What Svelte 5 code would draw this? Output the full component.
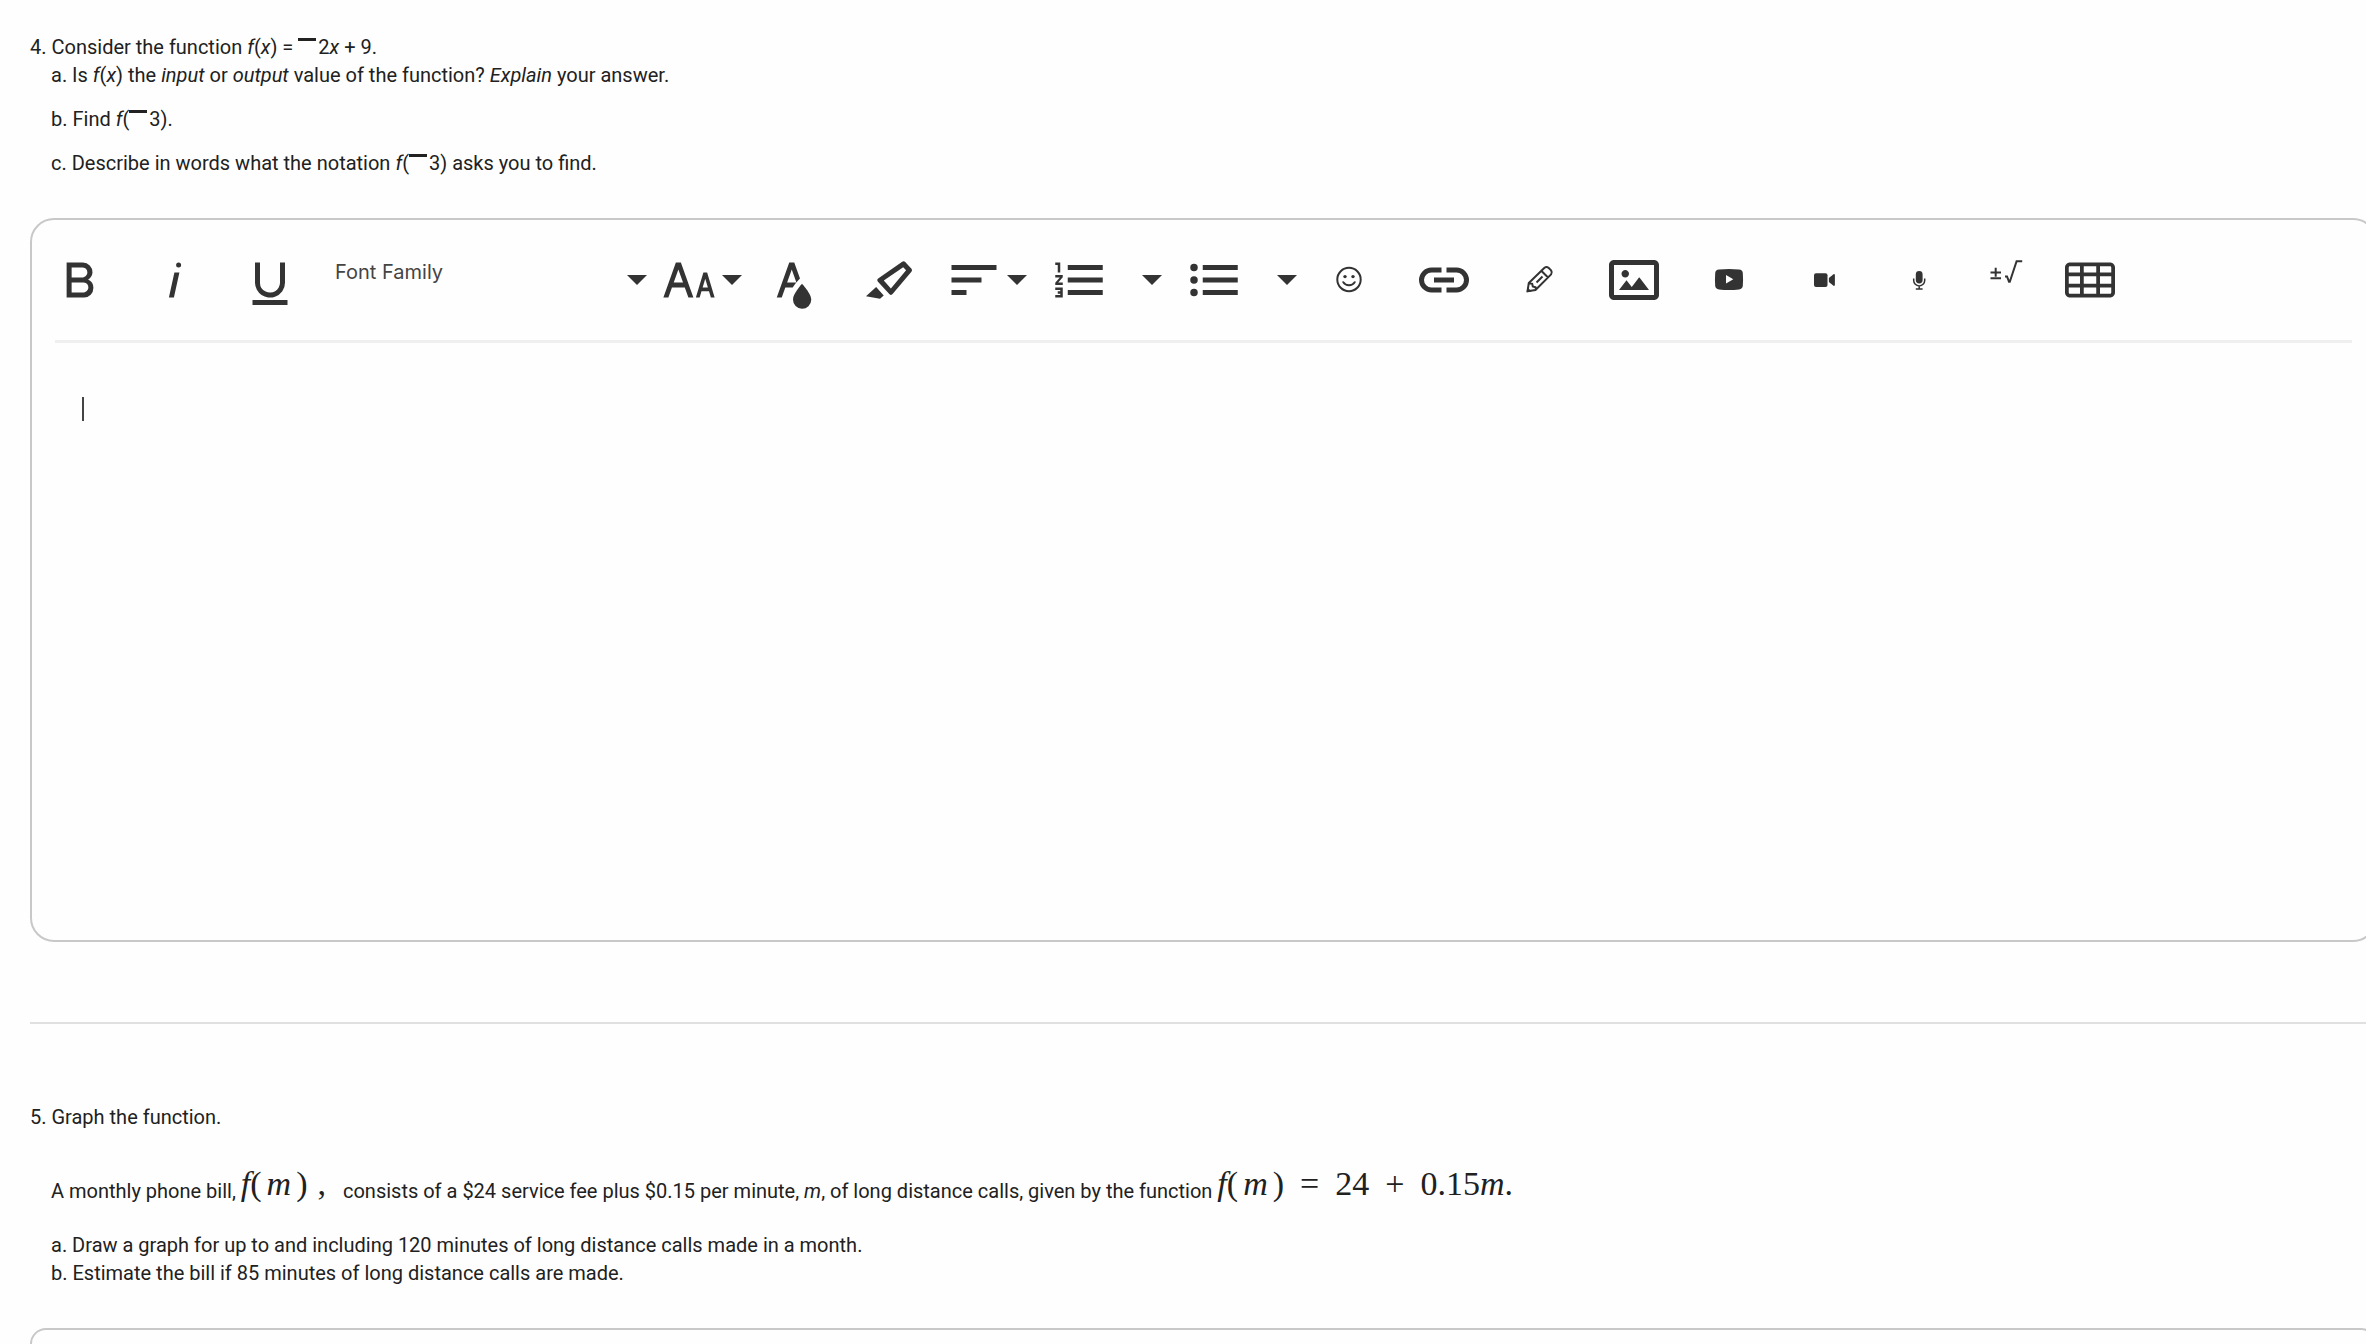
<script>
  const icons = {
    bold: 'M15.25,11.8h0A3.68,3.68,0,0,0,17,9a3.93,3.93,0,0,0-3.86-4H6.65V19h7a3.74,3.74,0,0,0,3.7-3.78V15.1A3.64,3.64,0,0,0,15.25,11.8ZM8.65,7h4.2a2.09,2.09,0,0,1,2,1.3,2.09,2.09,0,0,1-1.37,2.61,2.23,2.23,0,0,1-.63.09H8.65Zm4.6,10H8.65V13h4.6a2.09,2.09,0,0,1,2,1.3,2.09,2.09,0,0,1-1.37,2.61A2.23,2.23,0,0,1,13.25,17Z',
    italic: 'M11.76,9h2l-2.2,10h-2Zm1.68-4a1,1,0,1,0,1,1,1,1,0,0,0-1-1Z',
    underline: 'M19,20v2H5V20Zm-3-6.785a4,4,0,0,1-5.74,3.4A3.75,3.75,0,0,1,8,13.085V5.005H6v8.21a6,6,0,0,0,8,5.44,5.851,5.851,0,0,0,4-5.65v-8H16ZM16,5v0h2V5ZM8,5H6v0H8Z',
    size: 'M20.75,19h1.5l-3-10h-1.5l-3,10h1.5L17,16.5h3Zm-3.3-4,1.05-3.5L19.55,15Zm-5.7,4h2l-5-14h-2l-5,14h2l1.43-4h5.14ZM5.89,13,7.75,7.79,9.61,13Z',
    color: 'M15.2,13.494s-3.6,3.9-3.6,6.3a3.65,3.65,0,0,0,7.3.1v-.1C18.9,17.394,15.2,13.494,15.2,13.494Zm-1.47-1.357.669-.724L12.1,5h-2l-5,14h2l1.43-4h2.943A24.426,24.426,0,0,1,13.726,12.137ZM11.1,7.8l1.86,5.2H9.244Z',
    highlight: 'M9.918,12.241l7.748-5.39,1.179,1.296-6.094,7.207L9.918,12.241M7.587,12.652l4.535,4.983a.934.934,0,0,0,1.395-.091L20.969,8.731A.908.908,0,0,0,20.991,7.533l-2.513-2.761a.908.908,0,0,0-1.195-.091L7.809,11.271A.934.934,0,0,0,7.587,12.652ZM2.794,18.528,8.411,19.5l1.479-1.346-3.029-3.328Z',
    align: 'M3 18h6v-2H3v2zM3 6v2h18V6H3zm0 7h12v-2H3v2z',
    ordered: 'M2.5,16h2v.5h-1v1h1V18h-2v1h3V15h-3Zm1-7h1V5h-2V6h1Zm-1,2H4.3L2.5,13.1V14h3V13H3.7l1.8-2.1V10h-3Zm5-5V8h14V6Zm0,12h14V16H7.5Zm0-5h14V11H7.5Z',
    bullets: 'M7.5 6v2h14V6zM7.5 11v2h14v-2zM7.5 16v2h14v-2zM4 5.5a1.5 1.5 0 1 0 0 3 1.5 1.5 0 0 0 0-3zM4 10.5a1.5 1.5 0 1 0 0 3 1.5 1.5 0 0 0 0-3zM4 15.5a1.5 1.5 0 1 0 0 3 1.5 1.5 0 0 0 0-3z',
    link: 'M11,17H7A5,5,0,0,1,7,7h4V9H7a3,3,0,0,0,0,6h4ZM17,7H13V9h4a3,3,0,0,1,0,6H13v2h4A5,5,0,0,0,17,7Zm-1,4H8v2h8Z',
    image: 'M14.2,11l3.8,5H6l3-3.9l2.1,2.7L14,11H14.2z M8.5,11c0.8,0,1.5-0.7,1.5-1.5S9.3,8,8.5,8S7,8.7,7,9.5C7,10.3,7.7,11,8.5,11z M22,6v12c0,1.1-0.9,2-2,2H4c-1.1,0-2-0.9-2-2V6c0-1.1,0.9-2,2-2h16C21.1,4,22,4.9,22,6z M20,8.8V6H4v12h16V8.8z',
    table: 'M20,5H4C2.9,5,2,5.9,2,7v2v1.5v3V15v2c0,1.1,0.9,2,2,2h16c1.1,0,2-0.9,2-2v-2v-1.5v-3V9V7C22,5.9,21.1,5,20,5z M9.5,13.5v-3h5v3H9.5z M14.5,15v2.5h-5V15H14.5z M9.5,9V6.5h5V9H9.5z M3.5,7c0-0.3,0.2-0.5,0.5-0.5h4V9H3.5V7z M3.5,10.5H8v3H3.5V10.5z M3.5,17v-2H8v2.5H4C3.7,17.5,3.5,17.3,3.5,17z M20.5,17c0,0.3-0.2,0.5-0.5,0.5h-4V15h4.5V17z M20.5,13.5H16v-3h4.5V13.5z M16,9V6.5h4c0.3,0,0.5,0.2,0.5,0.5v2H16z'
  };
</script>

{#snippet icon(name)}
  <svg class="icon" viewBox="0 0 24 24" aria-hidden="true"><path fill-rule="evenodd" d={icons[name]} /></svg>
{/snippet}

{#snippet arrow()}
  <svg class="arrow" viewBox="0 0 20 10" aria-hidden="true"><path d="M0 0h20L10 10z" /></svg>
{/snippet}

{#snippet tool(name, label)}
  <button type="button" class="tool" aria-label={label}>{@render icon(name)}</button>
{/snippet}

{#snippet neg()}<span class="neg" role="img" aria-label="negative"></span>{/snippet}

{#snippet fm()}<span class="call"><span><i>f</i>(</span><i>m</i><span>)</span></span>{/snippet}

<main>
  <section class="question">
    <p>4. Consider the function <i>f</i>(<i>x</i>) = {@render neg()}2<i>x</i> + 9.</p>
    <p class="part">a. Is <i>f</i>(<i>x</i>) the <i>input</i> or <i>output</i> value of the function? <i>Explain</i> your answer.</p>
    <p class="part spaced">b. Find <i>f</i>({@render neg()}3).</p>
    <p class="part spaced">c. Describe in words what the notation <i>f</i>({@render neg()}3) asks you to find.</p>
  </section>

  <div class="editor">
    <div class="toolbar" role="toolbar" aria-label="Formatting">
      {@render tool('bold', 'Bold')}
      {@render tool('italic', 'Italic')}
      {@render tool('underline', 'Underline')}
      <div class="family">
        <select aria-label="Font family"><option>Font Family</option></select>
        {@render arrow()}
      </div>
      <button type="button" class="tool with-arrow" aria-label="Font size">{@render icon('size')}{@render arrow()}</button>
      {@render tool('color', 'Text color')}
      {@render tool('highlight', 'Highlight')}
      <button type="button" class="tool with-arrow" aria-label="Align">{@render icon('align')}{@render arrow()}</button>
      {@render tool('ordered', 'Ordered list')}
      <button type="button" class="more" aria-label="Ordered list styles">{@render arrow()}</button>
      {@render tool('bullets', 'Bulleted list')}
      <button type="button" class="more" aria-label="Bulleted list styles">{@render arrow()}</button>
      <button type="button" class="tool" aria-label="Emoji">
        <svg class="icon line" viewBox="0 0 60 60" aria-hidden="true">
          <circle cx="30" cy="29.5" r="11.7" />
          <path d="M24.3 32.2c2.6 4 8.8 4 11.4 0" stroke-linecap="round" />
          <circle class="solid" cx="26" cy="26.6" r="1.7" /><circle class="solid" cx="34" cy="26.6" r="1.7" />
        </svg>
      </button>
      {@render tool('link', 'Insert link')}
      <button type="button" class="tool" aria-label="Draw">
        <svg class="icon line" viewBox="0 0 60 60" aria-hidden="true">
          <path stroke-linejoin="round" d="M18.500 41.300l1.300-8.300L35.500 17.800q2-1.400 4 0l2.600 2.600q1.400 2 0 4L26.500 40zM32.500 21l6.300 6.300M20 33.200l3.200.6.600 2.800 2.800.6.200 2.600M27.500 32.500l6-6" />
          <path class="solid" d="M17.600 42.300l.8-5 4.200 4.200z" />
        </svg>
      </button>
      {@render tool('image', 'Insert image')}
      <button type="button" class="tool" aria-label="Insert video">
        <svg class="icon" viewBox="0 0 60 60" aria-hidden="true">
          <path fill-rule="evenodd" d="M20 19.600q10-1.200 20 0 3.500.4 3.800 3.400.5 6.500 0 13-.3 3-3.800 3.400-10 1.200-20 0-3.500-.4-3.800-3.400-.5-6.500 0-13 .3-3 3.800-3.400zM27 25v8.400l7.300-4.200z" />
        </svg>
      </button>
      <button type="button" class="tool" aria-label="Record video">
        <svg class="icon" viewBox="0 0 60 60" aria-hidden="true">
          <rect x="20" y="23.200" width="13.500" height="13.800" rx="2" />
          <path d="M34.900 28l4.600-3.800q1.400-.4 1.400 1v9.600q0 1.400-1.400 1L34.900 32z" />
        </svg>
      </button>
      <button type="button" class="tool" aria-label="Record audio">
        <svg class="icon" viewBox="0 0 60 60" aria-hidden="true">
          <rect x="26.800" y="21" width="6.800" height="12.400" rx="3.400" />
          <path fill="none" stroke="#333" stroke-width="1.500" d="M24.700 28.400v2a5.500 5.500 0 0 0 11 0v-2M30.200 36v3M26.800 39h6.800" />
        </svg>
      </button>
      <button type="button" class="tool math" aria-label="Insert equation">
        <svg class="icon line" viewBox="0 0 60 60" aria-hidden="true">
          <path d="M16.500 22.500h10.500M21.700 17.700v9M16.500 28.300h10.500M31 26.500h2l2 5.200h.8L42.600 11.200h5.600" />
        </svg>
      </button>
      {@render tool('table', 'Insert table')}
    </div>
    <div class="writing">
      <span class="caret"></span>
      <textarea aria-label="Answer to question 4"></textarea>
    </div>
  </div>

  <hr />

  <section class="question">
    <p>5. Graph the function.</p>
    <p class="part monthly">A monthly phone bill, <span class="formula bill">{@render fm()}<span>,</span></span> consists of a $24 service fee plus $0.15 per minute, <i>m</i>, of long distance calls, given by the function <span class="formula">{@render fm()}<span>=</span><span>24</span><span>+</span><span>0.15<i>m</i>.</span></span></p>
    <p class="part">a. Draw a graph for up to and including 120 minutes of long distance calls made in a month.</p>
    <p class="part">b. Estimate the bill if 85 minutes of long distance calls are made.</p>
  </section>

  <div class="editor next"></div>
</main>

<style>
  :global(body) {
    background: #fefefe;
  }
  main {
    display: flex;
    flex-direction: column;
    box-sizing: border-box;
    height: 100vh;
    padding: 33px 0 0 30px;
    overflow: hidden;
    color: #212121;
    font: 20px/28px Roboto, sans-serif;
  }
  p {
    margin: 0;
  }
  .part {
    padding-left: 21px;
  }
  .spaced {
    margin-top: 16px;
  }
  .neg {
    display: inline-block;
    width: 18px;
    height: 3px;
    margin-right: 2px;
    background: #222;
    vertical-align: 13px;
  }
  .editor {
    flex: none;
    box-sizing: border-box;
    margin: 41px -11px 0 0;
    padding: 0 23px;
    border: 2px solid #c8c8c8;
    border-radius: 24px;
  }
  .next {
    flex: 1;
    border-bottom: 0;
    border-radius: 24px 24px 0 0;
  }
  .toolbar {
    display: flex;
    align-items: center;
    margin-left: -23px;
    padding: 30px 0;
  }
  button {
    display: flex;
    flex: none;
    align-items: center;
    justify-content: center;
    height: 60px;
    padding: 0;
    border: 0;
    background: none;
  }
  svg {
    display: block;
    flex: none;
    fill: #333;
  }
  .tool {
    width: 95px;
  }
  .tool.math {
    width: 76px;
  }
  .with-arrow {
    justify-content: flex-start;
    gap: 3px;
    padding-left: 8px;
  }
  .more {
    width: 40px;
    justify-content: flex-end;
    padding-right: 4px;
  }
  .icon {
    width: 60px;
    height: 60px;
  }
  .arrow {
    width: 20px;
    height: 10px;
  }
  .line {
    fill: none;
    stroke: #333;
    stroke-width: 2;
  }
  .solid {
    fill: #333;
    stroke: none;
  }
  .family {
    display: flex;
    flex: none;
    align-items: center;
    box-sizing: border-box;
    width: 334px;
    height: 60px;
    padding: 0 4px 0 18px;
  }
  select {
    flex: 1;
    height: 60px;
    padding: 0 0 16px;
    border: 0;
    background: none;
    color: #444;
    font: 20px/28px Inter, sans-serif;
    appearance: none;
  }
  .writing {
    display: flex;
    align-items: flex-start;
    box-sizing: border-box;
    height: 600px;
    padding: 54px 27px 24px;
    border-top: 3px solid #efefef;
  }
  .caret {
    width: 2px;
    height: 24px;
    background: #444;
  }
  textarea {
    flex: 1;
    align-self: stretch;
    padding: 0;
    border: 0;
    outline: 0;
    background: none;
    font: 20px/24px Roboto, sans-serif;
    resize: none;
  }
  hr {
    width: 100%;
    height: 2px;
    margin: 80px 0 79px;
    border: 0;
    background: #e0e0e0;
  }
  .monthly {
    margin: 34px 0 26px;
  }
  .formula {
    display: inline-flex;
    gap: 16px;
    font: 34px/38px 'Liberation Serif', serif;
    vertical-align: 3px;
  }
  .call {
    display: inline-flex;
    gap: 5px;
  }
  .bill {
    gap: 10px;
    margin-right: 12px;
  }
</style>
